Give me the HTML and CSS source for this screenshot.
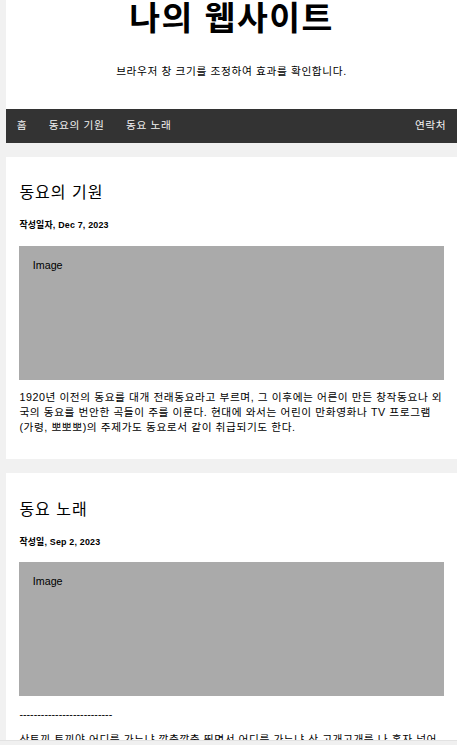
FILE: index.html
```html
<!DOCTYPE html>
<html lang="ko">
<head>
<meta charset="utf-8">
<title>나의 웹사이트</title>
<link rel="stylesheet" href="styles.css">
</head>
<body>
  <div class="header">
    <h1 class="title">나의 웹사이트</h1>
    <p class="subtitle">브라우저 창 크기를 조정하여 효과를 확인합니다.</p>
  </div>

  <nav class="topnav">
    <div class="nav-left">
      <a href="#">홈</a>
      <a href="#">동요의 기원</a>
      <a href="#">동요 노래</a>
    </div>
    <a href="#">연락처</a>
  </nav>

  <div class="card">
    <h2 class="card-title">동요의 기원</h2>
    <h5 class="card-date">작성일자, Dec 7, 2023</h5>
    <div class="fakeimg">Image</div>
    <p class="card-text">1920년 이전의 동요를 대개 전래동요라고 부르며, 그 이후에는 어른이 만든 창작동요나 외국의 동요를 번안한 곡들이 주를 이룬다. 현대에 와서는 어린이 만화영화나 TV 프로그램(가령, 뽀뽀뽀)의 주제가도 동요로서 같이 취급되기도 한다.</p>
  </div>

  <div class="card">
    <h2 class="card-title">동요 노래</h2>
    <h5 class="card-date">작성일, Sep 2, 2023</h5>
    <div class="fakeimg">Image</div>
    <p class="card-text card-rule">--------------------------</p>
    <p class="card-text">산토끼 토끼야 어디를 가느냐 깡충깡충 뛰면서 어디를 가느냐 산 고개고개를 나 혼자 넘어서 토실토실 알밤을 주워 올 테야</p>
  </div>

  <div class="scrollbar"></div>
</body>
</html>
```

FILE: styles.css
```css
* {
  box-sizing: border-box;
}

html, body {
  margin: 0;
}

body {
  padding: 0 0 0 6px;
  background: #f1f1f1;
  font-family: "Liberation Sans", Arial, "Noto Sans CJK KR", sans-serif;
  font-size: 10.72px;
  color: #000;
  overflow: hidden;
}

.header {
  background: #fff;
  text-align: center;
  padding: 0 13.4px 30px;
}

.title {
  margin: 0 0 26px;
  font-size: 33.5px;
  font-weight: bold;
  line-height: 38px;
  letter-spacing: 1.5px;
}

.subtitle {
  margin: 0;
  line-height: 15px;
  letter-spacing: 0.6px;
}

.topnav {
  display: flex;
  justify-content: space-between;
  background: #333;
}

.nav-left {
  display: flex;
}

.topnav a {
  display: block;
  color: #f2f2f2;
  text-decoration: none;
  padding: 9.38px 10.72px;
  line-height: 15.5px;
  letter-spacing: 0.6px;
}

.card {
  background: #fff;
  padding: 13.4px;
  margin-top: 13.4px;
}

.card-title {
  font-size: 16px;
  font-weight: normal;
  line-height: 20px;
  letter-spacing: 1px;
  margin: 13.4px 0 0;
}

.card-date {
  font-size: 8.9px;
  font-weight: bold;
  line-height: 13px;
  letter-spacing: 0.2px;
  margin: 16px 0 13.2px;
}

.fakeimg {
  background: #aaa;
  width: 100%;
  height: 134px;
  padding: 13.4px;
}

.card-text {
  margin: 10.72px 0;
  line-height: 15px;
  letter-spacing: 0.56px;
}

.card-rule {
  letter-spacing: 0;
}

.scrollbar {
  position: fixed;
  left: 0;
  right: 0;
  bottom: 0;
  height: 5px;
  background: #f0f0f0;
  border-top: 1px solid #e2e2e2;
}
```
